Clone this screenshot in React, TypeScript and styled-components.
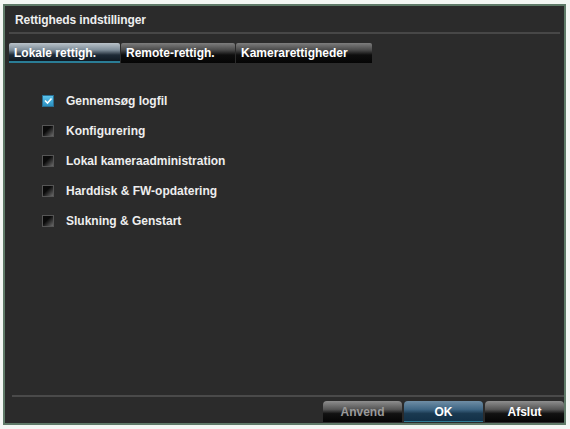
import React, { useState } from 'react';
import styled, { createGlobalStyle } from 'styled-components';

const GlobalStyle = createGlobalStyle`
    html, body {
        margin: 0;
        padding: 0;
        background: #f3f6f3;
    }
    body {
        font-family: "Liberation Sans", Arial, sans-serif;
    }
`

const StyledDialog = styled.div`
    margin: 4px 0 0 3px;
    width: 559px;
    height: 417px;
    background: #2b2b2b;
    border: 2px solid #5f7a68;
    display: flex;
    flex-direction: column;
    color: #eeeeee;
    font-size: 12px;
    font-weight: bold;
`

const StyledTitleBar = styled.div`
    margin: 0 4px;
    padding: 7px 0 5px 6px;
    border-bottom: 2px solid #474747;
    letter-spacing: -0.1px;
`

const StyledTabRow = styled.div`
    display: flex;
    padding: 9px 0 0 4px;
`

const StyledTab = styled.button<{ $active: boolean; $width: number }>`
    height: 20px;
    width: ${(p) => p.$width}px;
    padding: 0 0 0 5px;
    margin-right: 1px;
    border: none;
    border-radius: 2px 2px 0 0;
    text-align: left;
    font: inherit;
    color: #ffffff;
    cursor: pointer;
    background: ${(p) =>
        p.$active
            ? 'linear-gradient(#b9c2c9 0%, #7d8c98 35%, #1d2a36 60%, #0b141c 100%)'
            : 'linear-gradient(#7e7e7e 0%, #4a4a4a 35%, #0d0d0d 60%, #050505 100%)'};
    box-shadow: ${(p) => (p.$active ? 'inset 0 -2px 0 #2a7d96' : 'none')};
`

const StyledOptionList = styled.div`
    flex: 1;
    display: flex;
    flex-direction: column;
    padding: 28px 0 0 37px;
    gap: 11px;
`

const StyledOption = styled.label`
    display: flex;
    align-items: center;
    gap: 12px;
    height: 19px;
    cursor: pointer;
`

const StyledCheckbox = styled.span<{ $checked: boolean }>`
    width: 10px;
    height: 10px;
    flex: none;
    position: relative;
    background: ${(p) =>
        p.$checked
            ? 'linear-gradient(#5cc4ec, #2a8fc0)'
            : 'linear-gradient(135deg, #0a0a0a 40%, #6a6a6a 100%)'};
    border: 1px solid ${(p) => (p.$checked ? '#2a6f93' : '#555555')};
`

const StyledFooter = styled.div`
    margin: 0 0 0 7px;
    border-top: 2px solid #4a4a4a;
    padding: 4px 0 1px 0;
    display: flex;
    justify-content: flex-end;
    gap: 2px;
`

const StyledButton = styled.button<{ $variant: 'normal' | 'primary' | 'disabled' }>`
    width: 79px;
    height: 21px;
    border: none;
    border-radius: 4px 4px 0 0;
    font: inherit;
    font-size: 12px;
    cursor: pointer;
    color: ${(p) => (p.$variant === 'disabled' ? '#9a9a9a' : '#ffffff')};
    background: ${(p) =>
        p.$variant === 'primary'
            ? 'linear-gradient(#6f8ea6 0%, #3f6684 40%, #1a3950 60%, #123047 100%)'
            : 'linear-gradient(#8e8e8e 0%, #555555 40%, #121212 60%, #050505 100%)'};
    box-shadow: ${(p) => (p.$variant === 'primary' ? 'inset 0 -1px 0 #2d7a95' : 'none')};
`

const tabs = [
    { label: 'Lokale rettigh.', width: 111 },
    { label: 'Remote-rettigh.', width: 114 },
    { label: 'Kamerarettigheder', width: 136 },
]

const initialOptions = [
    { label: 'Gennemsøg logfil', checked: true },
    { label: 'Konfigurering', checked: false },
    { label: 'Lokal kameraadministration', checked: false },
    { label: 'Harddisk & FW-opdatering', checked: false },
    { label: 'Slukning & Genstart', checked: false },
]

const CheckMark = () => (
    <svg width="10" height="10" viewBox="0 0 10 10" style={{ position: 'absolute', left: 0, top: 0 }}>
        <path d="M2 4.5 L4.5 7 L8.5 2.5" stroke="#ffffff" strokeWidth="1.6" fill="none" />
    </svg>
)

const App = () => {
    const [activeTab, setActiveTab] = useState<number>(0)
    const [options, setOptions] = useState(initialOptions)

    const handleToggle = (i: number) => {
        setOptions(options.map((o, j) => (j === i ? { ...o, checked: !o.checked } : o)))
    }

    return (
        <>
            <GlobalStyle />
            <StyledDialog>
                <StyledTitleBar>Rettigheds indstillinger</StyledTitleBar>
                <StyledTabRow>
                    {tabs.map((tab, i) => (
                        <StyledTab key={i} $active={activeTab === i} $width={tab.width} onClick={() => setActiveTab(i)}>
                            {tab.label}
                        </StyledTab>
                    ))}
                </StyledTabRow>
                <StyledOptionList>
                    {options.map((opt, i) => (
                        <StyledOption key={i} onClick={() => handleToggle(i)}>
                            <StyledCheckbox $checked={opt.checked}>{opt.checked && <CheckMark />}</StyledCheckbox>
                            {opt.label}
                        </StyledOption>
                    ))}
                </StyledOptionList>
                <StyledFooter>
                    <StyledButton $variant="disabled">Anvend</StyledButton>
                    <StyledButton $variant="primary">OK</StyledButton>
                    <StyledButton $variant="normal">Afslut</StyledButton>
                </StyledFooter>
            </StyledDialog>
        </>
    );
};

export default App;
